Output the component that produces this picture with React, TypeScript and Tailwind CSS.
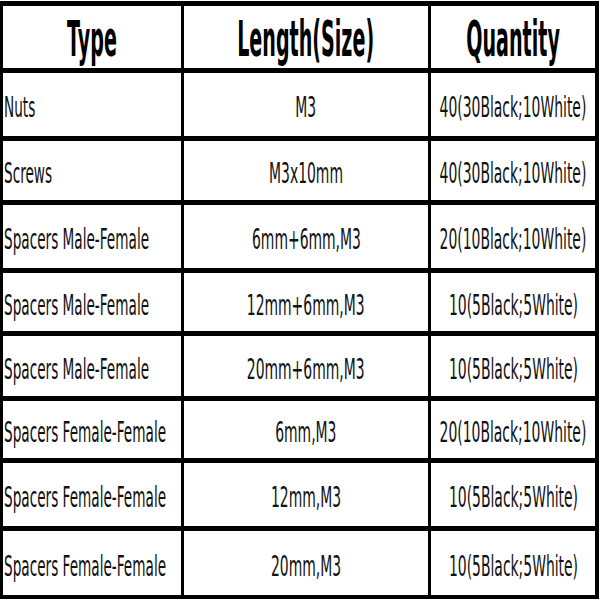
import React from "react";

const rows: [string, string, string][] = [
  ["Nuts", "M3", "40(30Black;10White)"],
  ["Screws", "M3x10mm", "40(30Black;10White)"],
  ["Spacers Male-Female", "6mm+6mm,M3", "20(10Black;10White)"],
  ["Spacers Male-Female", "12mm+6mm,M3", "10(5Black;5White)"],
  ["Spacers Male-Female", "20mm+6mm,M3", "10(5Black;5White)"],
  ["Spacers Female-Female", "6mm,M3", "20(10Black;10White)"],
  ["Spacers Female-Female", "12mm,M3", "10(5Black;5White)"],
  ["Spacers Female-Female", "20mm,M3", "10(5Black;5White)"],
];

function HeadCell({ text }: { text: string }) {
  return (
    <div className="bg-white flex items-center justify-center overflow-hidden pt-[4px]">
      <span className="inline-block whitespace-nowrap font-bold text-[49px] leading-none text-black scale-x-[0.39] origin-center">
        {text}
      </span>
    </div>
  );
}

function LeftCell({ text }: { text: string }) {
  return (
    <div className="bg-white flex items-center justify-start overflow-hidden pl-[1px] pt-[6px]">
      <span className="inline-block whitespace-nowrap text-[29px] leading-none text-[#111] scale-x-[0.47] origin-left">
        {text}
      </span>
    </div>
  );
}

function CenterCell({ text }: { text: string }) {
  return (
    <div className="bg-white flex items-center justify-center overflow-hidden pt-[6px]">
      <span className="inline-block whitespace-nowrap text-[29px] leading-none text-[#111] scale-x-[0.48] origin-center">
        {text}
      </span>
    </div>
  );
}

export default function App() {
  return (
    <div className="w-[600px] h-[600px] bg-white font-['DejaVu_Sans',sans-serif] pt-[1px]">
      <div className="grid w-[599px] grid-cols-[178px_244px_164px] grid-rows-[62px_63px_59px_63px_58px_60px_57px_63px_64px] gap-x-[3px] gap-y-[5px] bg-black pl-[3px] pr-[4px] pt-[5px] pb-[4px]">
        <HeadCell text="Type" />
        <HeadCell text="Length(Size)" />
        <HeadCell text="Quantity" />
        {rows.map((r, i) => (
          <React.Fragment key={i}>
            <LeftCell text={r[0]} />
            <CenterCell text={r[1]} />
            <CenterCell text={r[2]} />
          </React.Fragment>
        ))}
      </div>
    </div>
  );
}
